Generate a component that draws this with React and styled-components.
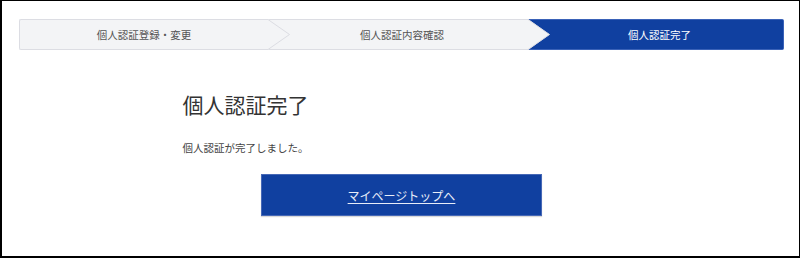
import React from "react";
import styled, { createGlobalStyle } from "styled-components";

const GlobalStyle = createGlobalStyle`
  html, body { margin: 0; padding: 0; background: #fff; }
  body { font-family: "Noto Sans CJK JP", "Noto Sans", sans-serif; }
`;

const Frame = styled.div`
  box-sizing: border-box;
  width: 800px;
  height: 258px;
  border-style: solid;
  border-color: #000;
  border-width: 1px 1px 2px 2px;
  padding: 18px 15px 0 17px;
`;

const Stepper = styled.ol`
  display: flex;
  margin: 0;
  padding: 0;
  list-style: none;
  height: 31px;
`;

const GRAY = "#f3f4f6";
const GRAY_LINE = "#dcdde3";
const BLUE = "#1040a0";
const BLUE_LINE = "#3a62b8";

const Step = styled.li`
  position: relative;
  box-sizing: border-box;
  flex: ${(p) => (p.$w ? `0 0 ${p.$w}px` : "1 1 auto")};
  height: 31px;
  display: flex;
  align-items: center;
  justify-content: center;
  padding-left: ${(p) => (p.$first ? "0" : "8px")};
  background: ${(p) => (p.$active ? BLUE : GRAY)};
  border-top: 1px solid ${(p) => (p.$active ? BLUE_LINE : GRAY_LINE)};
  border-bottom: 1px solid ${(p) => (p.$active ? BLUE_LINE : GRAY_LINE)};
  border-left: ${(p) => (p.$first ? `1px solid ${GRAY_LINE}` : "none")};
  border-right: ${(p) => (p.$last ? `1px solid ${BLUE_LINE}` : "none")};
  border-radius: ${(p) => (p.$first ? "2px 0 0 2px" : p.$last ? "0 2px 2px 0" : "0")};
  font-size: 10.5px;
  color: ${(p) => (p.$active ? "#fff" : "#555")};
  letter-spacing: 0;
`;

const Chevron = styled.svg`
  position: absolute;
  left: 100%;
  top: -1px;
  width: 22px;
  height: 31px;
  z-index: 1;
  overflow: visible;
`;

const Arrow = () => (
  <Chevron viewBox="0 0 22 31">
    <polygon points="0,0 21.5,15.5 0,31" fill={GRAY} />
    <polyline points="0,0.5 21.5,15.5 0,30.5" fill="none" stroke={GRAY_LINE} strokeWidth="1" />
  </Chevron>
);

const Content = styled.main`
  width: 438px;
  margin: 0 auto;
`;

const Heading = styled.h1`
  margin: 39px 0 0;
  font-size: 21px;
  line-height: 30px;
  font-weight: 400;
  color: #333;
`;

const Message = styled.p`
  margin: 21px 0 0;
  font-size: 10.5px;
  line-height: 16px;
  color: #444;
`;

const ButtonRow = styled.div`
  display: flex;
  justify-content: center;
  margin-top: 18px;
`;

const PrimaryButton = styled.a`
  box-sizing: border-box;
  width: 281px;
  height: 42px;
  display: flex;
  align-items: center;
  justify-content: center;
  background: ${BLUE};
  border: 1px solid #4668b6;
  box-shadow: 0 1px 1px rgba(0, 0, 0, 0.15);
  color: #e8edf8;
  font-size: 12px;
  text-decoration: underline;
  text-underline-offset: 2px;
  cursor: pointer;
`;

const steps = [
  { label: "個人認証登録・変更", w: 249 },
  { label: "個人認証内容確認", w: 260 },
  { label: "個人認証完了", active: true },
];

export default function App() {
  return (
    <>
      <GlobalStyle />
      <Frame>
        <Stepper>
          {steps.map((s, i) => (
            <Step
              key={s.label}
              $w={s.w}
              $active={s.active}
              $first={i === 0}
              $last={i === steps.length - 1}
            >
              {s.label}
              {i < steps.length - 1 && <Arrow />}
            </Step>
          ))}
        </Stepper>
        <Content>
          <Heading>個人認証完了</Heading>
          <Message>個人認証が完了しました。</Message>
          <ButtonRow>
            <PrimaryButton>マイページトップへ</PrimaryButton>
          </ButtonRow>
        </Content>
      </Frame>
    </>
  );
}
